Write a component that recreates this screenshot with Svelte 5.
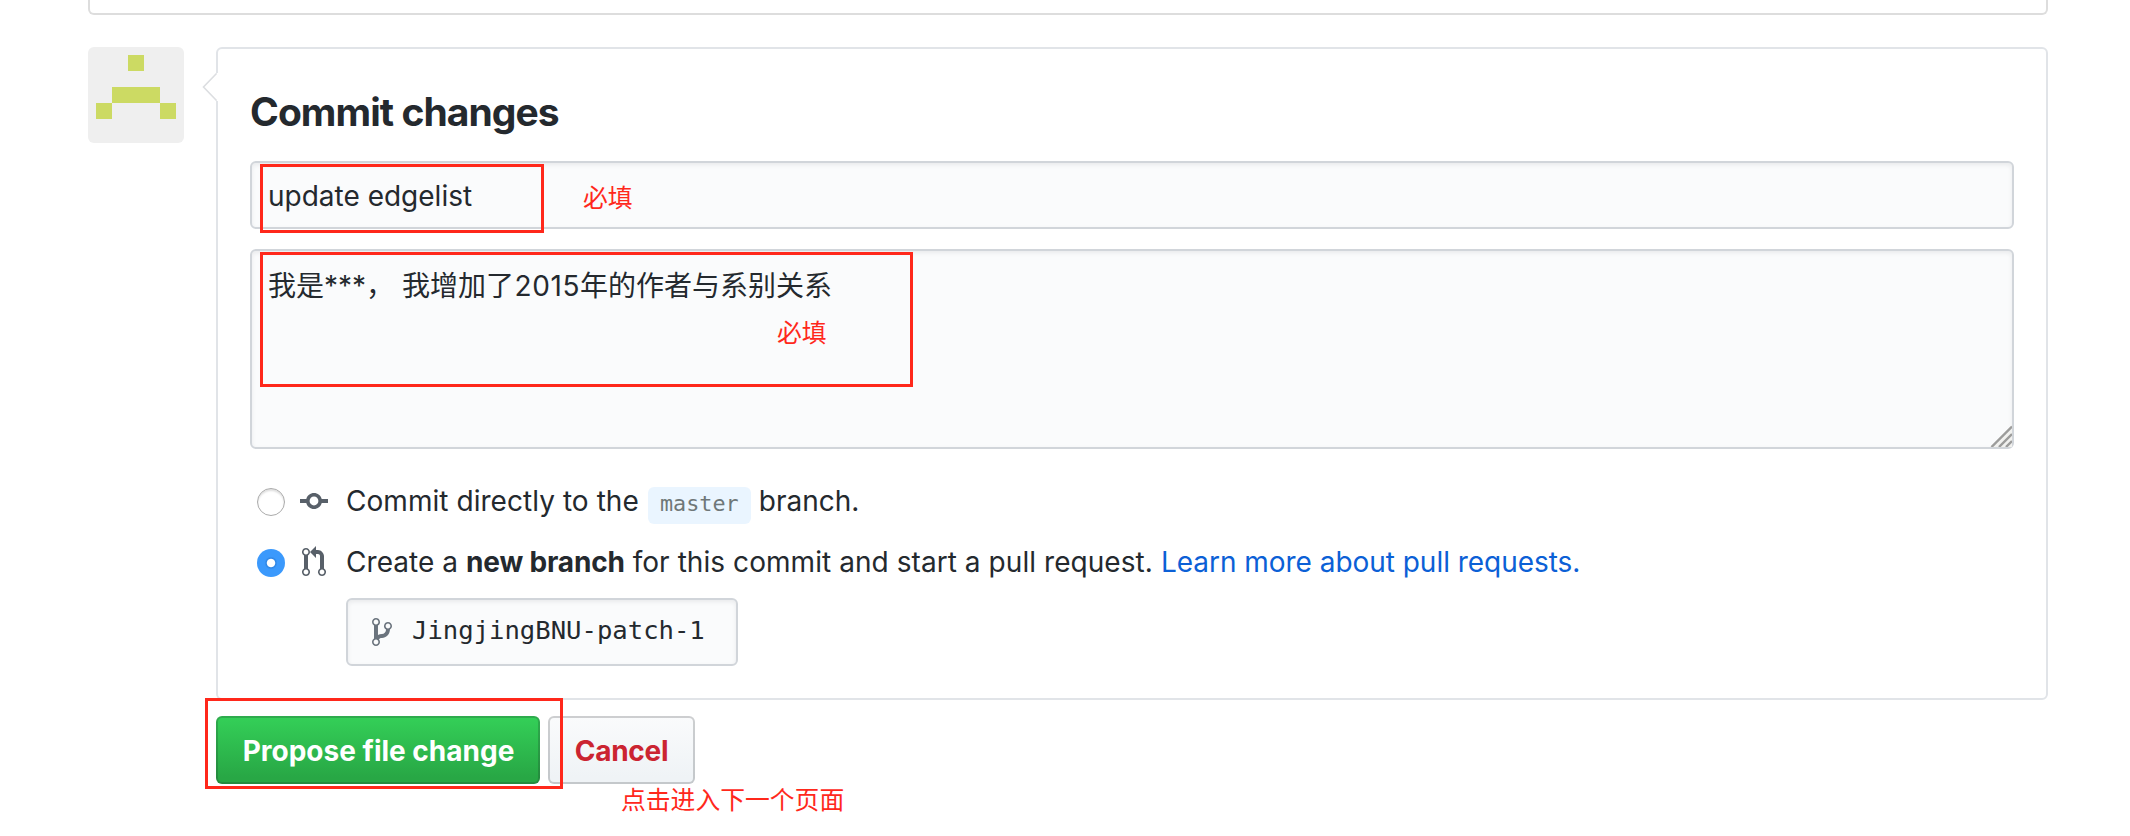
<script>
  const commitIcon = 'M10.86 7c-.45-1.72-2-3-3.86-3-1.86 0-3.41 1.28-3.86 3H0v2h3.14c.45 1.72 2 3 3.86 3 1.86 0 3.41-1.28 3.86-3H14V7h-3.14zM7 10.2c-1.22 0-2.2-.98-2.2-2.2 0-1.22.98-2.2 2.2-2.2 1.22 0 2.2.98 2.2 2.2 0 1.22-.98 2.2-2.2 2.2z';
  const pullIcon = 'M11 11.28V5c-.03-.78-.34-1.47-.94-2.06C9.46 2.35 8.78 2.03 8 2H7V0L4 3l3 3V4h1c.27.02.48.11.69.31.21.2.3.42.31.69v6.28A1.993 1.993 0 0 0 10 15a1.993 1.993 0 0 0 1-3.72zm-1 2.92c-.66 0-1.2-.55-1.2-1.2 0-.65.55-1.2 1.2-1.2.65 0 1.2.55 1.2 1.2 0 .65-.55 1.2-1.2 1.2zM4 3c0-1.11-.89-2-2-2a1.993 1.993 0 0 0-1 3.72v6.56A1.993 1.993 0 0 0 2 15a1.993 1.993 0 0 0 1-3.72V4.72c.59-.34 1-.98 1-1.72zm-.8 10c0 .66-.55 1.2-1.2 1.2-.65 0-1.2-.55-1.2-1.2 0-.65.55-1.2 1.2-1.2.65 0 1.2.55 1.2 1.2zM2 4.2C1.34 4.2.8 3.65.8 3c0-.65.55-1.2 1.2-1.2.65 0 1.2.55 1.2 1.2 0 .65-.55 1.2-1.2 1.2z';
  const branchIcon = 'M10 5c0-1.11-.89-2-2-2a1.993 1.993 0 0 0-1 3.72v.3c-.02.52-.23.98-.63 1.38-.4.4-.86.61-1.38.63-.83.02-1.48.16-2 .45V4.72a1.993 1.993 0 0 0-1-3.72C.88 1 0 1.89 0 3a2 2 0 0 0 1 1.72v6.56c-.59.35-1 .99-1 1.72 0 1.11.89 2 2 2 1.11 0 2-.89 2-2 0-.53-.2-1-.53-1.36.09-.06.48-.41.59-.47.25-.11.56-.17.94-.17 1.05-.05 1.95-.45 2.75-1.25S8.95 7.77 9 6.73h-.02C9.59 6.37 10 5.73 10 5zM2 1.8c.66 0 1.2.55 1.2 1.2 0 .65-.55 1.2-1.2 1.2C1.35 4.2.8 3.65.8 3c0-.65.55-1.2 1.2-1.2zm0 12.41c-.66 0-1.2-.55-1.2-1.2 0-.65.55-1.2 1.2-1.2.65 0 1.2.55 1.2 1.2 0 .65-.55 1.2-1.2 1.2zm6-8c-.66 0-1.2-.55-1.2-1.2 0-.65.55-1.2 1.2-1.2.65 0 1.2.55 1.2 1.2 0 .65-.55 1.2-1.2 1.2z';
</script>

<main>
  <div class="editor-end"></div>
  <div class="row">
    <svg class="avatar" viewBox="0 0 96 96" width="96" height="96" shape-rendering="crispEdges">
      <rect width="96" height="96" fill="#efefef" />
      <path fill="#ccda63" d="M40 8h16v16H40zM24 40h48v16H24zM8 56h16v16H8zM72 56h16v16H72z" />
    </svg>
    <div class="column">
      <section class="card">
        <svg class="caret" width="18" height="30" viewBox="0 0 18 30">
          <path d="M16 1L3 15l13 14h2V1z" fill="#fff" />
          <path d="M15.5 1.5L2.5 15l13 13.5" fill="none" stroke="#dcdee1" stroke-width="1.6" />
        </svg>
        <h2>Commit changes</h2>
        <div class="field summary">update edgelist</div>
        <div class="field description">
          我是***， 我增加了<span class="num">2015</span>年的作者与系别关系
          <svg class="grip" width="22" height="22" viewBox="0 0 22 22">
            <path d="M22 0v22H0z" fill="#f1f1ef" />
            <path d="M1.5 22L22 1.5M9 22L22 9M16 22l6-6" stroke="#9c9c9b" stroke-width="2.4" fill="none" />
          </svg>
        </div>
        <div class="option first">
          <i class="radio"></i>
          <span class="icon"><svg width="28" height="32" viewBox="0 0 14 16"><path d={commitIcon} /></svg></span>
          <span class="direct">Commit directly to the</span><code>master</code><span>branch.</span>
        </div>
        <div class="option second">
          <i class="radio checked"></i>
          <span class="icon"><svg width="24" height="32" viewBox="0 0 12 16"><path d={pullIcon} /></svg></span>
          <span class="create">Create a <b>new branch</b> for this commit and start a pull request. <a href="#learn">Learn more about pull requests.</a></span>
        </div>
        <div class="field branch">
          <svg width="20" height="32" viewBox="0 0 10 16"><path d={branchIcon} /></svg>
          <span>JingjingBNU-patch-1</span>
        </div>
      </section>
      <div class="actions">
        <button class="primary">Propose file change</button>
        <button class="cancel">Cancel</button>
      </div>
    </div>
  </div>

  <div class="mark m1"></div>
  <div class="mark m2"></div>
  <div class="mark m3"></div>
  <span class="note n1">必填</span>
  <span class="note n2">必填</span>
  <span class="note n3">点击进入下一个页面</span>
</main>

<style>
  :global(body) { background: #fff; overflow: hidden; }
  main {
    position: relative;
    box-sizing: border-box;
    height: 836px;
    padding: 0 82px 0 88px;
    font: 28px/42px Inter, 'Noto Sans CJK SC', sans-serif;
    color: #24292e;
  }
  .editor-end {
    box-sizing: border-box;
    height: 15px;
    border: 2px solid #ddd;
    border-top: 0;
    border-radius: 0 0 6px 6px;
  }
  .row { display: flex; gap: 32px; margin-top: 32px; }
  .avatar { flex: none; border-radius: 6px; }
  .column { flex: 1; }
  .card {
    position: relative;
    box-sizing: border-box;
    height: 653px;
    padding: 33px 32px 32px;
    border: 2px solid #e1e4e8;
    border-radius: 6px;
  }
  .caret { position: absolute; left: -17px; top: 23px; }
  h2 { margin: 0 0 19px; font-size: 39px; line-height: 60px; font-weight: 680; letter-spacing: -0.95px; }
  .field {
    position: relative;
    box-sizing: border-box;
    border: 2px solid #d1d5da;
    border-radius: 6px;
    background: #fafbfc;
    box-shadow: inset 0 2px 4px rgba(27, 31, 35, 0.075);
  }
  .summary { height: 68px; padding: 12px 16px; }
  .description { height: 200px; margin-top: 20px; padding: 14px 16px; }
  .num { margin-left: 0.5px; letter-spacing: 0.6px; }
  .grip { position: absolute; right: 0; bottom: 0; }
  .option { display: flex; align-items: center; height: 32px; padding-left: 5px; white-space: nowrap; }
  .first { margin-top: 36px; }
  .second { margin-top: 29px; }
  .radio {
    box-sizing: border-box;
    flex: none;
    width: 28px;
    height: 28px;
    margin: 2px 15px 0 2px;
    border: 1px solid #ababab;
    border-radius: 50%;
    background: #fff;
    box-shadow: inset 0 2px 2px rgba(0, 0, 0, 0.13);
  }
  .radio.checked {
    border: 0;
    box-shadow: none;
    background: radial-gradient(circle at 50% 50%, #fff 3.7px, #2e85e4 4.7px, #3b99fc 6.5px);
  }
  .icon { display: flex; justify-content: center; width: 28px; margin-right: 18px; }
  .icon svg, .branch svg { display: block; fill: #586069; }
  .branch svg { fill: #6a737d; }
  .direct { letter-spacing: 0.05px; }
  code {
    box-sizing: border-box;
    width: 103px;
    height: 37px;
    margin: 9px 8px 0 9px;
    border-radius: 6px;
    background: #eaf5ff;
    color: #6f7778;
    font: 21.8px/33px 'DejaVu Sans Mono', monospace;
    text-align: center;
  }
  b { font-weight: 650; letter-spacing: -0.18px; }
  .create { letter-spacing: 0.06px; }
  a { color: #0b60d6; text-decoration: none; letter-spacing: -0.03px; }
  .branch {
    display: flex;
    align-items: center;
    width: 392px;
    height: 68px;
    margin: 20px 0 0 96px;
    padding: 0 0 0 24px;
    font: 25.6px/64px 'DejaVu Sans Mono', monospace;
    white-space: nowrap;
  }
  .branch span { margin: -4px 0 0 20px; }
  .actions { display: flex; gap: 8px; margin-top: 16px; }
  button {
    box-sizing: border-box;
    height: 68px;
    padding: 2px 0 0 1px;
    border: 2px solid rgba(27, 31, 35, 0.2);
    border-radius: 6px;
    font: 700 28px/42px Inter, sans-serif;
    background-origin: border-box;
    white-space: nowrap;
  }
  .primary { width: 324px; color: #fff; background-image: linear-gradient(#34d058, #28a745 90%); letter-spacing: 0; }
  .cancel { width: 147px; padding-left: 0; color: #cb2431; background-image: linear-gradient(#fafbfc, #eff3f6 90%); letter-spacing: -0.3px; }
  .mark { position: absolute; box-sizing: border-box; border: 3px solid #ff281b; }
  .m1 { left: 260px; top: 164px; width: 284px; height: 69px; }
  .m2 { left: 260px; top: 252px; width: 653px; height: 135px; }
  .m3 { left: 205px; top: 698px; width: 358px; height: 91px; }
  .note { position: absolute; color: #ff281b; font: 400 24.8px/30px 'Noto Sans CJK SC', sans-serif; white-space: nowrap; }
  .n1 { left: 583px; top: 181px; }
  .n2 { left: 777px; top: 316px; }
  .n3 { left: 621px; top: 783px; }
</style>
